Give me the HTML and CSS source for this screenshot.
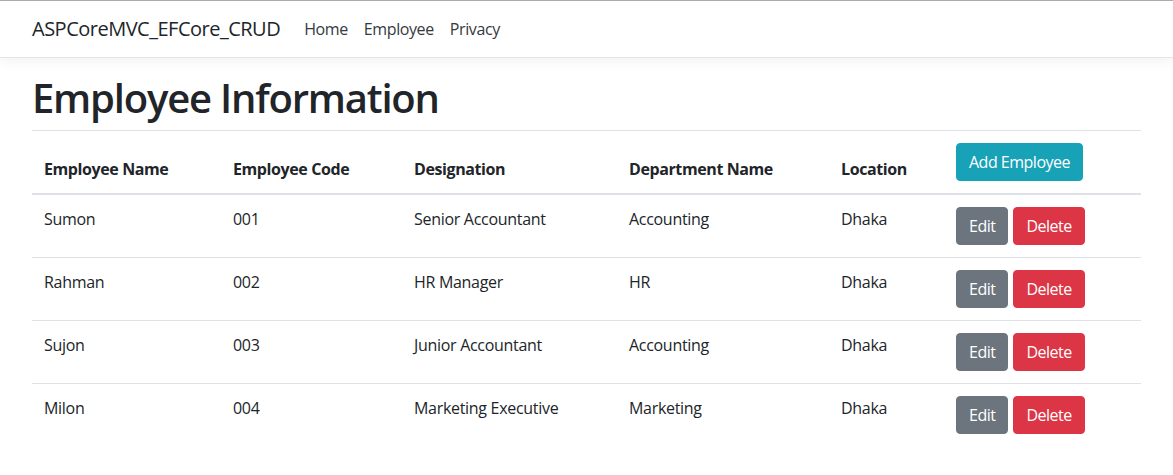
FILE: index.html
```html
<!DOCTYPE html>
<html lang="en">
<head>
<meta charset="utf-8">
<title>Employee Information</title>
<link rel="stylesheet" href="styles.css">
</head>
<body>
<header class="navbar">
  <a class="brand" href="#">ASPCoreMVC_EFCore_CRUD</a>
  <nav class="nav">
    <a class="nav-link" href="#">Home</a>
    <a class="nav-link" href="#">Employee</a>
    <a class="nav-link" href="#">Privacy</a>
  </nav>
</header>
<main class="container">
  <h1 class="title">Employee Information</h1>
  <table class="table">
    <colgroup>
      <col class="c1"><col class="c2"><col class="c3"><col class="c4"><col class="c5"><col class="c6">
    </colgroup>
    <thead>
      <tr>
        <th>Employee Name</th>
        <th>Employee Code</th>
        <th>Designation</th>
        <th>Department Name</th>
        <th>Location</th>
        <th><a class="btn btn-info" href="#">Add Employee</a></th>
      </tr>
    </thead>
    <tbody>
      <tr>
        <td>Sumon</td><td>001</td><td>Senior Accountant</td><td>Accounting</td><td>Dhaka</td>
        <td><div class="actions"><a class="btn btn-secondary" href="#">Edit</a><a class="btn btn-danger" href="#">Delete</a></div></td>
      </tr>
      <tr>
        <td>Rahman</td><td>002</td><td>HR Manager</td><td>HR</td><td>Dhaka</td>
        <td><div class="actions"><a class="btn btn-secondary" href="#">Edit</a><a class="btn btn-danger" href="#">Delete</a></div></td>
      </tr>
      <tr>
        <td>Sujon</td><td>003</td><td>Junior Accountant</td><td>Accounting</td><td>Dhaka</td>
        <td><div class="actions"><a class="btn btn-secondary" href="#">Edit</a><a class="btn btn-danger" href="#">Delete</a></div></td>
      </tr>
      <tr>
        <td>Milon</td><td>004</td><td>Marketing Executive</td><td>Marketing</td><td>Dhaka</td>
        <td><div class="actions"><a class="btn btn-secondary" href="#">Edit</a><a class="btn btn-danger" href="#">Delete</a></div></td>
      </tr>
    </tbody>
  </table>
</main>
</body>
</html>
```
FILE: styles.css
```css
* { box-sizing: border-box; }
html, body { margin: 0; padding: 0; }
body {
  font-family: "Open Sans", "Noto Sans", "Liberation Sans", sans-serif;
  font-size: 16px;
  line-height: 1.5;
  letter-spacing: -0.3px;
  color: #212529;
  background: #fff;
  border-top: 1px solid #ababab;
}
a { text-decoration: none; }

.navbar {
  display: flex;
  align-items: center;
  padding: 8px 32px;
  background: #fff;
  border-bottom: 1px solid #e5e5e5;
  box-shadow: 0 4px 12px rgba(0,0,0,.05);
  margin-bottom: 16px;
}
.brand {
  font-size: 20px;
  line-height: 30px;
  padding: 5px 0;
  margin-right: 16px;
  letter-spacing: -0.5px;
  color: #212529;
}
.nav { display: flex; }
.nav-link {
  display: block;
  padding: 8px 8px;
  color: #343a40;
  font-size: 16px;
  line-height: 24px;
  letter-spacing: -0.4px;
}

.container { padding: 0 32px; }
.title {
  font-size: 40px;
  font-weight: 600;
  line-height: 1.2;
  letter-spacing: -1.2px;
  margin: 0 0 8px;
}

.table {
  width: 100%;
  border-collapse: collapse;
  table-layout: fixed;
}
.c1 { width: 189px; }
.c2 { width: 181px; }
.c3 { width: 215px; }
.c4 { width: 212px; }
.c5 { width: 115px; }
.c6 { width: auto; }
.table th, .table td {
  padding: 12px;
  border-top: 1px solid #dee2e6;
  text-align: left;
  vertical-align: top;
}
.table thead th {
  vertical-align: bottom;
  border-bottom: 2px solid #dee2e6;
  font-weight: 700;
  letter-spacing: -0.4px;
}

.actions { display: flex; gap: 5px; }
.btn {
  display: inline-block;
  padding: 6px 12px;
  font-size: 16px;
  font-weight: 400;
  line-height: 24px;
  letter-spacing: -0.5px;
  border-radius: 4px;
  color: #fff;
  border: 1px solid transparent;
}
.btn-info { background: #17a2b8; border-color: #17a2b8; }
.btn-secondary { background: #6c757d; border-color: #6c757d; }
.btn-danger { background: #dc3545; border-color: #dc3545; }
```
